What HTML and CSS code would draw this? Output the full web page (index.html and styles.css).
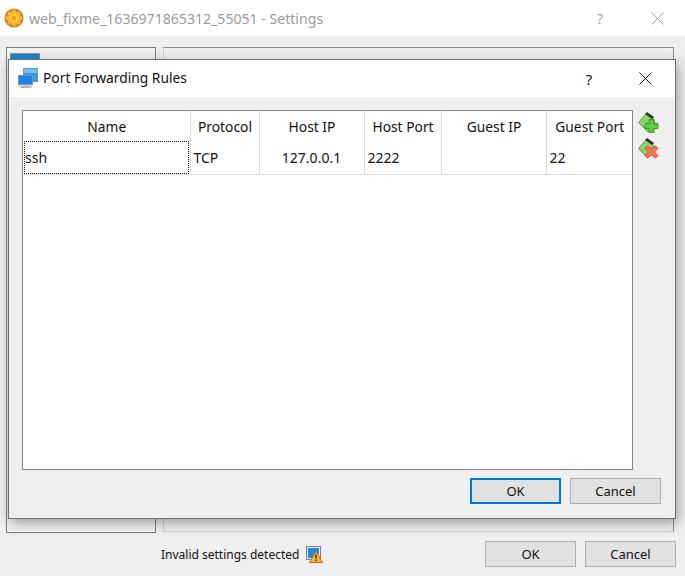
FILE: index.html
```html
<!DOCTYPE html>
<html lang="en">
<head>
  <meta charset="UTF-8">
  <title>Port Forwarding Rules</title>
  <link rel="stylesheet" href="styles.css">
</head>
<body>
  <div class="window">
    <!-- settings window behind the dialog -->
    <div class="titlebar">
      <svg class="app-icon" width="20" height="20" viewBox="0 0 20 20">
        <circle cx="10" cy="10" r="9.500" fill="#e2701f"/>
        <g fill="#f7b52e">
          <circle cx="10" cy="4" r="2.400"/><circle cx="10" cy="16" r="2.400"/>
          <circle cx="4" cy="10" r="2.400"/><circle cx="16" cy="10" r="2.400"/>
          <circle cx="5.800" cy="5.800" r="2.400"/><circle cx="14.200" cy="5.800" r="2.400"/>
          <circle cx="5.800" cy="14.200" r="2.400"/><circle cx="14.200" cy="14.200" r="2.400"/>
        </g>
        <circle cx="10" cy="10" r="5" fill="#f9c53f"/>
        <circle cx="10" cy="10" r="2.200" fill="#f39a2c"/>
      </svg>
      <span class="title-text">web_fixme_1636971865312_55051 - Settings</span>
      <span class="help muted">?</span>
      <svg class="close" width="13" height="13" viewBox="0 0 13 13"><path d="M0.500 0.500l12 12M12.500 0.500l-12 12" stroke="#a8a8a8" stroke-width="1" fill="none"/></svg>
    </div>
    <div class="panels">
      <div class="side-panel"><div class="side-chip"></div></div>
      <div class="main-panel"></div>
    </div>
    <div class="footer">
      <span class="status">Invalid settings detected</span>
      <svg class="warn-icon" width="17" height="17" viewBox="0 0 17 17">
        <rect x="0.500" y="0.500" width="14" height="13" fill="#eef" stroke="#7a7f87"/>
        <rect x="2" y="2" width="11" height="10" fill="#1e88e0"/>
        <path d="M10 5l6.500 11.500h-13z" fill="#f9b233" stroke="#d9601a"/>
        <path d="M10 8.500v4M10 13.500v1.500" stroke="#222" stroke-width="1.300"/>
      </svg>
      <button class="btn footer-ok">OK</button>
      <button class="btn">Cancel</button>
    </div>

    <!-- port forwarding dialog -->
    <div class="dialog">
      <div class="dialog-title">
        <svg class="net-icon" width="21" height="21" viewBox="0 0 21 21">
          <rect x="5.500" y="0.500" width="14" height="13" fill="#2d9bf0" stroke="#8a9099"/>
          <path d="M6 1h13v4H6z" fill="#6cc0ff"/>
          <rect x="0.500" y="7.500" width="14" height="9" fill="#1c86e6" stroke="#8a9099"/>
          <path d="M1 17h13v3H1z" fill="#d5d8dc"/>
          <path d="M3 19h9" stroke="#8a9099"/>
        </svg>
        <span class="dialog-name">Port Forwarding Rules</span>
        <span class="help">?</span>
        <svg class="close" width="13" height="13" viewBox="0 0 13 13"><path d="M0.500 0.500l12 12M12.500 0.500l-12 12" stroke="#111" stroke-width="1" fill="none"/></svg>
      </div>
      <div class="dialog-body">
        <div class="rules-row">
          <div class="rules">
            <table>
              <colgroup>
                <col class="c-name"><col class="c-proto"><col class="c-hip"><col class="c-hport"><col class="c-gip"><col class="c-gport">
              </colgroup>
              <tr class="head">
                <th>Name</th><th>Protocol</th><th>Host IP</th><th>Host Port</th><th>Guest IP</th><th>Guest Port</th>
              </tr>
              <tr class="row">
                <td class="focus"><span>ssh</span></td><td class="proto">TCP</td><td class="ip">127.0.0.1</td><td>2222</td><td></td><td>22</td>
              </tr>
            </table>
          </div>
          <div class="tools">
            <svg width="21" height="21" viewBox="0 0 21 21">
              <path d="M0.500 10.500L8 2l8 6 1 4-7 8z" fill="#8ed36a" stroke="#4a9e30"/>
              <path d="M7 2l2-2 7 5-1.500 2z" fill="#2e2e2e"/>
              <path d="M11 7.500h5v4h4v5h-4v4h-5v-4H7v-5h4z" fill="#5ecb3e" stroke="#3a9a22"/>
            </svg>
            <svg width="21" height="21" viewBox="0 0 21 21">
              <path d="M0.500 10.500L8 2l8 6 1 4-7 8z" fill="#8ed36a" stroke="#4a9e30"/>
              <path d="M7 2l2-2 7 5-1.500 2z" fill="#2e2e2e"/>
              <path d="M9.500 8l4 3 4-3 2.500 2.500-3.500 3.500 3.500 3.500-2.500 2.500-4-3-4 3L7 17.500l3.500-3.500L7 10.500z" fill="#f4775a" stroke="#d9502f"/>
            </svg>
          </div>
        </div>
        <div class="dialog-buttons">
          <button class="btn default">OK</button>
          <button class="btn">Cancel</button>
        </div>
      </div>
    </div>
  </div>
</body>
</html>
```
FILE: styles.css
```css
* {
  margin: 0;
  padding: 0;
  box-sizing: border-box;
}
body {
  width: 685px;
  height: 576px;
  overflow: hidden;
  background: #efefef;
  font-family: "Noto Sans", "Open Sans", sans-serif;
  font-size: 14px;
  color: #111;
}
.window {
  position: relative;
  height: 576px;
}

/* title bars */
.titlebar {
  display: flex;
  align-items: center;
  height: 36px;
  padding: 0 21px 0 4px;
  background: #fff;
}
.title-text {
  margin-left: 5px;
  color: #9a9a9a;
  flex: 1;
  font-size: 14.1px;
}
.help {
  font-size: 15px;
  width: 14px;
  text-align: center;
}
.help.muted {
  color: #a8a8a8;
}
.titlebar .close {
  margin-left: 44px;
}

/* panels behind the dialog */
.panels {
  display: flex;
  gap: 7px;
  height: 497px;
  padding: 11px 11px 0 6px;
}
.side-panel {
  width: 150px;
  height: 486px;
  border: 1px solid #7c7c7c;
  padding: 5px 0 0 3px;
  background: #f2f2f2;
}
.side-chip {
  width: 30px;
  height: 20px;
  background: #1e86c9;
  border: 1px solid #8a9099;
}
.main-panel {
  flex: 1;
  height: 485px;
  border: 1px solid #d0d0d0;
  border-top-color: #8a8a8a;
  border-right-color: #8a8a8a;
  background: #f0f0f0;
}
.footer {
  display: flex;
  align-items: center;
  height: 26px;
  margin-top: 8px;
  padding-left: 161px;
}
.status {
  width: 145px;
  font-size: 12px;
  white-space: nowrap;
}
.footer-ok {
  margin-left: 162px;
  margin-right: 9px;
}

.btn {
  width: 91px;
  height: 26px;
  background: #e1e1e1;
  border: 1px solid #adadad;
  font: inherit;
  font-size: 13px;
  color: #111;
}
.btn.default {
  border: 2px solid #0078d7;
}

/* dialog */
.dialog {
  position: absolute;
  left: 8px;
  top: 59px;
  width: 668px;
  height: 460px;
  background: #efefef;
  border: 1px solid #6e6e6e;
  box-shadow: 2px 4px 12px rgba(0, 0, 0, 0.35);
}
.dialog-title {
  display: flex;
  align-items: center;
  height: 37px;
  padding: 0 23px 0 9px;
  background: #fff;
}
.dialog-name {
  margin: -2px 0 0 4px;
  flex: 1;
  font-size: 13.8px;
}
.dialog-title .close {
  margin-left: 43px;
}
.dialog-body {
  padding: 13px 14px 0 13px;
}
.rules-row {
  display: flex;
}
.rules {
  width: 611px;
  height: 360px;
  background: #fff;
  border: 1px solid #82868c;
}
table {
  border-collapse: collapse;
  table-layout: fixed;
  width: 609px;
}
.c-name { width: 167px; }
.c-proto { width: 69px; }
.c-hip { width: 105px; }
.c-hport { width: 77px; }
.c-gip { width: 105px; }
.c-gport { width: 86px; }
th, td {
  border-right: 1px solid #dcdcdc;
  font-weight: normal;
}
th:last-child, td:last-child {
  border-right: 0;
}
.head th {
  height: 30px;
  padding-left: 1px;
  font-size: 13.8px;
  text-align: center;
}
.row td {
  height: 33px;
  padding-left: 3px;
  border-bottom: 1px solid #dcdcdc;
  font-size: 14px;
}
.row td.focus {
  padding: 0 0 0 1px;
}
.focus span {
  display: flex;
  align-items: center;
  height: 33px;
  width: 165px;
  border: 1px dotted #111;
}
.row td.proto {
  padding-left: 3px;
}
.row td.ip {
  padding: 0;
  text-align: center;
}
.tools {
  display: flex;
  flex-direction: column;
  gap: 5px;
  margin: 2px 0 0 5px;
}
.dialog-buttons {
  display: flex;
  justify-content: flex-end;
  gap: 9px;
  margin-top: 8px;
}
```
